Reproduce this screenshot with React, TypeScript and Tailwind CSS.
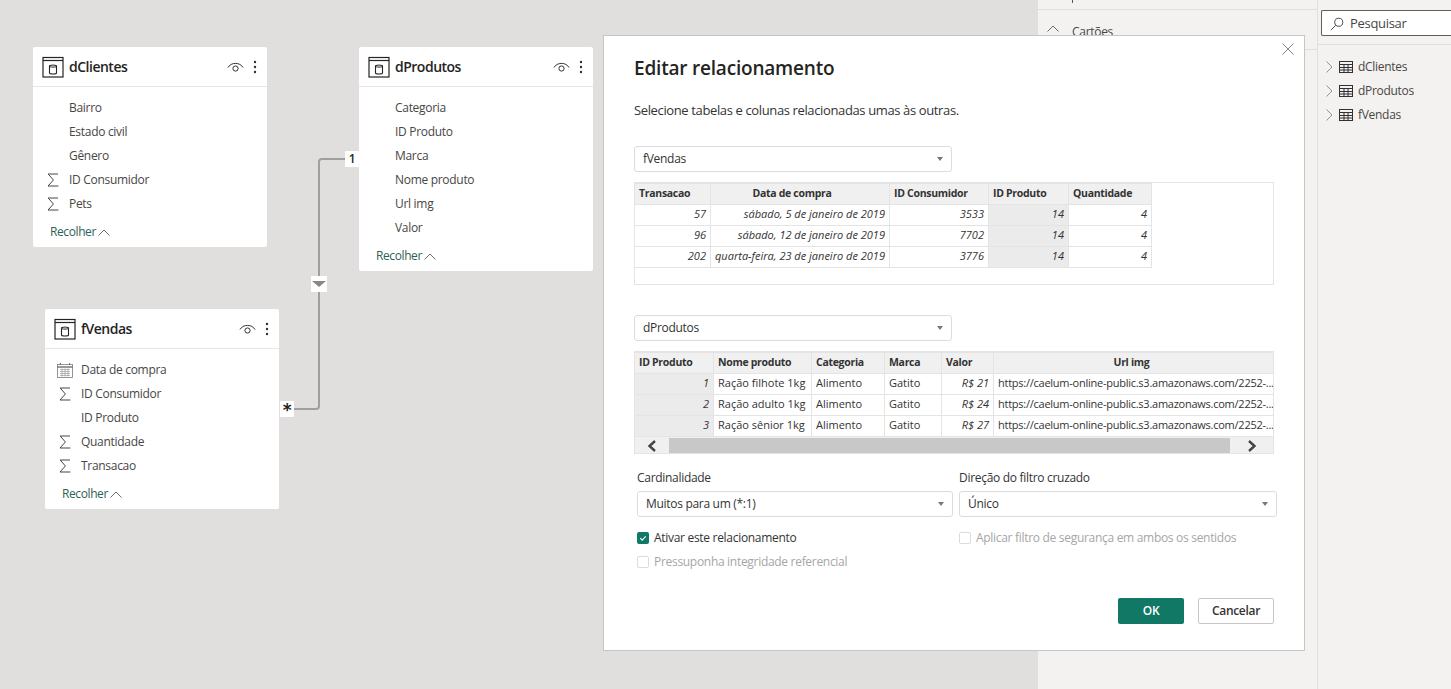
import { ReactNode } from 'react';

type FieldIcon = 'sum' | 'calendar' | null;

type Field = { label: string; icon: FieldIcon };

const clientes: Field[] = [
  { label: 'Bairro', icon: null },
  { label: 'Estado civil', icon: null },
  { label: 'Gênero', icon: null },
  { label: 'ID Consumidor', icon: 'sum' },
  { label: 'Pets', icon: 'sum' },
];

const produtos: Field[] = [
  { label: 'Categoria', icon: null },
  { label: 'ID Produto', icon: null },
  { label: 'Marca', icon: null },
  { label: 'Nome produto', icon: null },
  { label: 'Url img', icon: null },
  { label: 'Valor', icon: null },
];

const vendas: Field[] = [
  { label: 'Data de compra', icon: 'calendar' },
  { label: 'ID Consumidor', icon: 'sum' },
  { label: 'ID Produto', icon: null },
  { label: 'Quantidade', icon: 'sum' },
  { label: 'Transacao', icon: 'sum' },
];

const url = 'https://caelum-online-public.s3.amazonaws.com/2252-...';

const vendasRows = [
  ['57', 'sábado, 5 de janeiro de 2019', '3533', '14', '4'],
  ['96', 'sábado, 12 de janeiro de 2019', '7702', '14', '4'],
  ['202', 'quarta-feira, 23 de janeiro de 2019', '3776', '14', '4'],
];

const produtosRows = [
  ['1', 'Ração filhote 1kg', 'Alimento', 'Gatito', 'R$ 21', url],
  ['2', 'Ração adulto 1kg', 'Alimento', 'Gatito', 'R$ 24', url],
  ['3', 'Ração sênior 1kg', 'Alimento', 'Gatito', 'R$ 27', url],
];

function TableIcon() {
  return (
    <svg width="22" height="22" viewBox="0 0 22 22" fill="none" stroke="#252423" className="flex-none">
      <rect x="1" y="1.5" width="20" height="19.5" strokeWidth="1.2" />
      <line x1="1" y1="4.5" x2="21" y2="4.5" strokeWidth="1.2" />
      <path d="M7.5 10c0-1.3 7-1.3 7 0v7c0 1.3-7 1.3-7 0z" strokeWidth="1.1" />
      <path d="M7.5 10.2c0 1.2 7 1.2 7 0" strokeWidth="1" />
    </svg>
  );
}

function EyeIcon() {
  return (
    <svg width="17" height="12" viewBox="0 0 17 12" fill="none" stroke="#323130" className="flex-none">
      <path d="M1 6.5C4 1 13 1 16 6.5" strokeWidth="1" />
      <circle cx="8.5" cy="7.5" r="2.6" strokeWidth="1" />
    </svg>
  );
}

function DotsIcon() {
  return (
    <svg width="4" height="14" viewBox="0 0 4 14" fill="#323130" className="mt-px flex-none">
      <circle cx="2" cy="2" r="1.2" />
      <circle cx="2" cy="7" r="1.2" />
      <circle cx="2" cy="12" r="1.2" />
    </svg>
  );
}

function SumIcon() {
  return (
    <svg width="12" height="14" viewBox="0 0 12 14" fill="none" stroke="#323130" strokeWidth="0.9">
      <path d="M11 1H1.2L6.4 7 1 13h10.4" />
    </svg>
  );
}

function CalendarIcon() {
  return (
    <svg width="16" height="15" viewBox="0 0 16 15" fill="none" stroke="#7a7a7a" strokeWidth="0.8">
      <rect x="0.5" y="1.5" width="15" height="13" />
      <line x1="0.5" y1="4" x2="15.5" y2="4" stroke="#555" strokeWidth="1.2" />
      <path d="M3 6.5h10M3 8.5h10M3 10.5h10M3 12.5h10M5 5.5v8M8 5.5v8M11 5.5v8" strokeWidth="0.7" stroke="#999" />
      <path d="M3.5 0v2M12.5 0v2" stroke="#555" />
    </svg>
  );
}

function Chevron({ className }: { className?: string }) {
  return (
    <svg width="12" height="7" viewBox="0 0 12 7" fill="none" stroke="#605e5c" strokeWidth="0.9" className={className}>
      <path d="M0.5 6.5L6 1l5.5 5.5" />
    </svg>
  );
}

function TableCard({ name, fields, className }: { name: string; fields: Field[]; className: string }) {
  return (
    <div className={`absolute w-[234px] rounded-[2px] bg-white ${className}`}>
      <div className="flex h-10 items-center border-b border-[#e6e6e6] pl-[9px] pr-[10px]">
        <TableIcon />
        <span className="ml-[5px] flex-1 text-[14px] font-semibold tracking-[-0.5px] text-[#252423]">{name}</span>
        <EyeIcon />
        <span className="ml-[9px] flex">
          <DotsIcon />
        </span>
      </div>
      <div className="pt-[9px]">
        {fields.map((f) => (
          <div key={f.label} className="flex h-6 items-center text-[12px] text-[#484644]">
            <span className="flex w-[36px] flex-none justify-center pl-[4px]">
              {f.icon === 'sum' && <SumIcon />}
              {f.icon === 'calendar' && <CalendarIcon />}
            </span>
            {f.label}
          </div>
        ))}
      </div>
      <div className="flex h-[31px] items-center gap-[2px] pb-[3px] pl-[17px] pt-[4px] text-[12px] tracking-[-0.4px] text-[#2f5f58]">
        Recolher
        <Chevron />
      </div>
    </div>
  );
}

function Caret() {
  return <span className="h-0 w-0 border-x-[3px] border-t-[4px] border-x-transparent border-t-[#777]" />;
}

function Select({ value, className }: { value: string; className: string }) {
  return (
    <div
      className={`flex h-[26px] items-center justify-between rounded-[3px] border border-[#dcdcdc] pl-[8px] pr-[8px] text-[12px] text-[#333] ${className}`}
    >
      {value}
      <Caret />
    </div>
  );
}

function HeaderCell({ children, width, className }: { children: ReactNode; width: number; className?: string }) {
  return (
    <th
      style={{ width }}
      className={`h-[21px] overflow-hidden whitespace-nowrap border border-[#e4e4e4] bg-[#f0f0f0] px-1 text-[10.5px] font-bold text-[#333] ${className ?? 'text-left'}`}
    >
      {children}
    </th>
  );
}

function Cell({ children, right, shaded }: { children: ReactNode; right?: boolean; shaded?: boolean }) {
  return (
    <td
      className={`h-[21px] overflow-hidden whitespace-nowrap border border-[#e4e4e4] px-1 pb-[2px] text-[11px] tracking-normal text-[#333] ${right ? 'text-right italic' : 'text-left'} ${shaded ? 'bg-[#ebebeb]' : ''}`}
    >
      {children}
    </td>
  );
}

function Check({ on, label, className }: { on?: boolean; label: string; className?: string }) {
  return (
    <div className={`flex h-[14px] items-center gap-[5px] text-[12px] ${on ? 'text-[#333]' : 'text-[#a6a6a6]'} ${className ?? ''}`}>
      {on ? (
        <span className="flex h-3 w-3 items-center justify-center rounded-[2px] bg-[#117865]">
          <svg width="8" height="8" viewBox="0 0 8 8" fill="none" stroke="white" strokeWidth="1.2">
            <path d="M1.3 4.2l1.9 1.9 3.5-3.8" />
          </svg>
        </span>
      ) : (
        <span className="h-3 w-3 rounded-[2px] border border-[#dcdcdc]" />
      )}
      {label}
    </div>
  );
}

function Arrow({ left }: { left?: boolean }) {
  return (
    <svg width="10" height="12" viewBox="0 0 10 12" fill="none" stroke="#444" strokeWidth="2.4">
      <path d={left ? 'M8 1L2.5 6 8 11' : 'M2 1l5.5 5L2 11'} />
    </svg>
  );
}

function Dialog() {
  return (
    <div className="absolute left-[603px] top-[35px] h-[616px] w-[702px] border border-[#c8c6c4] bg-white pl-[30px]">
      <svg width="12" height="12" viewBox="0 0 12 12" stroke="#777" strokeWidth="0.9" className="absolute right-[10px] top-[7px]">
        <path d="M0.5 0.5l11 11M11.5 0.5l-11 11" />
      </svg>
      <h2 className="pt-[19px] text-[19px] font-semibold leading-[27px] tracking-[-0.2px] text-[#252423]">Editar relacionamento</h2>
      <p className="mt-[19px] text-[13px] leading-[18px] tracking-[-0.37px] text-[#333]">Selecione tabelas e colunas relacionadas umas às outras.</p>

      <Select value="fVendas" className="mt-[27px] w-[318px]" />
      <div className="mt-[10px] h-[103px] w-[640px] border border-[#e4e4e4]">
        <table className="-ml-px table-fixed border-collapse">
          <thead>
            <tr>
              <HeaderCell width={76}>Transacao</HeaderCell>
              <HeaderCell width={177} className="pr-[20px] text-center">Data de compra</HeaderCell>
              <HeaderCell width={99}>ID Consumidor</HeaderCell>
              <HeaderCell width={80}>ID Produto</HeaderCell>
              <HeaderCell width={83}>Quantidade</HeaderCell>
            </tr>
          </thead>
          <tbody>
            {vendasRows.map((r) => (
              <tr key={r[0]}>
                {r.map((c, i) => (
                  <Cell key={i} right shaded={i === 3}>{c}</Cell>
                ))}
              </tr>
            ))}
          </tbody>
        </table>
      </div>

      <Select value="dProdutos" className="mt-[30px] w-[318px]" />
      <div className="mt-[10px] h-[103px] w-[640px] overflow-hidden border border-[#e4e4e4]">
        <table className="-ml-px w-[641px] table-fixed border-collapse">
          <thead>
            <tr>
              <HeaderCell width={79}>ID Produto</HeaderCell>
              <HeaderCell width={98}>Nome produto</HeaderCell>
              <HeaderCell width={73}>Categoria</HeaderCell>
              <HeaderCell width={57}>Marca</HeaderCell>
              <HeaderCell width={52}>Valor</HeaderCell>
              <HeaderCell width={282} className="pr-[10px] text-center">Url img</HeaderCell>
            </tr>
          </thead>
          <tbody>
            {produtosRows.map((r) => (
              <tr key={r[0]}>
                {r.map((c, i) => (
                  <Cell key={i} right={i === 0 || i === 4} shaded={i === 0}>
                    {i === 5 ? <span className="tracking-[-0.25px]">{c}</span> : c}
                  </Cell>
                ))}
              </tr>
            ))}
          </tbody>
        </table>
        <div className="flex h-[18px] items-center bg-[#f0f0f0]">
          <span className="flex w-[34px] flex-none justify-center"><Arrow left /></span>
          <span className="h-4 w-[561px] bg-[#c8c8c8]" />
          <span className="flex flex-1 justify-center"><Arrow /></span>
        </div>
      </div>

      <div className="mt-[15px] grid w-[643px] grid-cols-[322px_318px] pl-[3px]">
        <div className="flex flex-col">
          <span className="text-[12px] leading-[17px] text-[#333]">Cardinalidade</span>
          <Select value="Muitos para um (*:1)" className="mt-[5px] w-[316px]" />
          <Check on label="Ativar este relacionamento" className="mt-[14px]" />
          <Check label="Pressuponha integridade referencial" className="mt-[10px]" />
        </div>
        <div className="flex flex-col">
          <span className="text-[12px] leading-[17px] text-[#333]">Direção do filtro cruzado</span>
          <Select value="Único" className="mt-[5px] w-[318px]" />
          <Check label="Aplicar filtro de segurança em ambos os sentidos" className="mt-[14px]" />
        </div>
      </div>

      <div className="mt-[29px] flex w-[640px] justify-end gap-[14px]">
        <button type="button" className="h-[26px] w-[66px] rounded-[2px] bg-[#117865] text-[12px] font-semibold text-white">OK</button>
        <button type="button" className="h-[26px] w-[76px] rounded-[2px] border border-[#c8c6c4] bg-white text-[12px] font-semibold text-[#333]">Cancelar</button>
      </div>
    </div>
  );
}

function Connector() {
  return (
    <>
      <svg width="70" height="270" viewBox="0 0 70 270" fill="none" stroke="#a19f9d" strokeWidth="2" className="absolute left-[290px] top-[150px]">
        <path d="M55 9H32q-3 0-3 3v244q0 3-3 3H0" />
      </svg>
      <span className="absolute left-[345px] top-[151px] flex h-4 w-[14px] items-center justify-center rounded-[1px] bg-white text-[12px] font-semibold text-[#252423]">1</span>
      <span className="absolute left-[311px] top-[276px] flex h-4 w-4 items-center justify-center rounded-[1px] bg-white">
        <span className="h-0 w-0 border-x-[7px] border-t-[6px] border-x-transparent border-t-[#8a8886]" />
      </span>
      <span className="absolute left-[280px] top-[401px] flex h-4 w-[14px] items-center justify-center rounded-[1px] bg-white font-['DejaVu_Sans',sans-serif] text-[17px] font-bold leading-none text-[#252423]">
        <span className="mt-[3px]">*</span>
      </span>
    </>
  );
}

export default function App() {
  return (
    <div className="relative flex h-[689px] w-[1451px] overflow-hidden bg-white font-['Open_Sans',sans-serif] tracking-[-0.3px]">
      <div className="relative w-[1038px] flex-none bg-[#e1dfdd]">
        <TableCard name="dClientes" fields={clientes} className="left-[33px] top-[47px]" />
        <TableCard name="dProdutos" fields={produtos} className="left-[359px] top-[47px]" />
        <TableCard name="fVendas" fields={vendas} className="left-[45px] top-[309px]" />
        <Connector />
      </div>

      <div className="relative w-[280px] flex-none border-r border-[#e1dfdd] bg-[#f3f2f1]">
        <span className="absolute left-[34px] top-0 h-[3px] w-px bg-[#555]" />
        <div className="h-[10px] border-b border-[#e1dfdd]" />
        <div className="flex h-[40px] items-center border-b border-[#e1dfdd] pl-[9px] pt-[4px]">
          <Chevron className="-mt-[6px]" />
          <span className="ml-[13px] text-[12px] text-[#484644]">Cartões</span>
        </div>
      </div>

      <div className="flex-1 bg-[#f3f2f1] pt-[10px]">
        <div className="ml-[3px] flex h-[26px] items-center rounded-l-[2px] border border-r-0 border-[#605e5c] bg-white pl-[8px] pt-px text-[13px] text-[#484644]">
          <svg width="14" height="14" viewBox="0 0 16 16" fill="none" stroke="#484644" strokeWidth="1.1" className="mr-[6px]">
            <circle cx="10" cy="6" r="4.6" />
            <path d="M6.6 9.4L1 15" />
          </svg>
          Pesquisar
        </div>
        <div className="mt-[8px] border-t border-[#e1dfdd] pt-[10px]">
          {['dClientes', 'dProdutos', 'fVendas'].map((t) => (
            <div key={t} className="flex h-6 items-center pl-[8px] text-[12px] text-[#484644]">
              <svg width="7" height="12" viewBox="0 0 7 12" fill="none" stroke="#8a8886" strokeWidth="0.9">
                <path d="M0.5 0.5L6 6l-5.5 5.5" />
              </svg>
              <svg width="14" height="12" viewBox="0 0 14 12" fill="none" stroke="#323130" strokeWidth="1" className="ml-[6px] mr-[5px]">
                <rect x="0.5" y="0.5" width="13" height="11" />
                <path d="M0.5 3.5h13M0.5 6.5h13M0.5 9h13M5 3.5v8M9 3.5v8" />
              </svg>
              {t}
            </div>
          ))}
        </div>
      </div>

      <Dialog />
    </div>
  );
}
